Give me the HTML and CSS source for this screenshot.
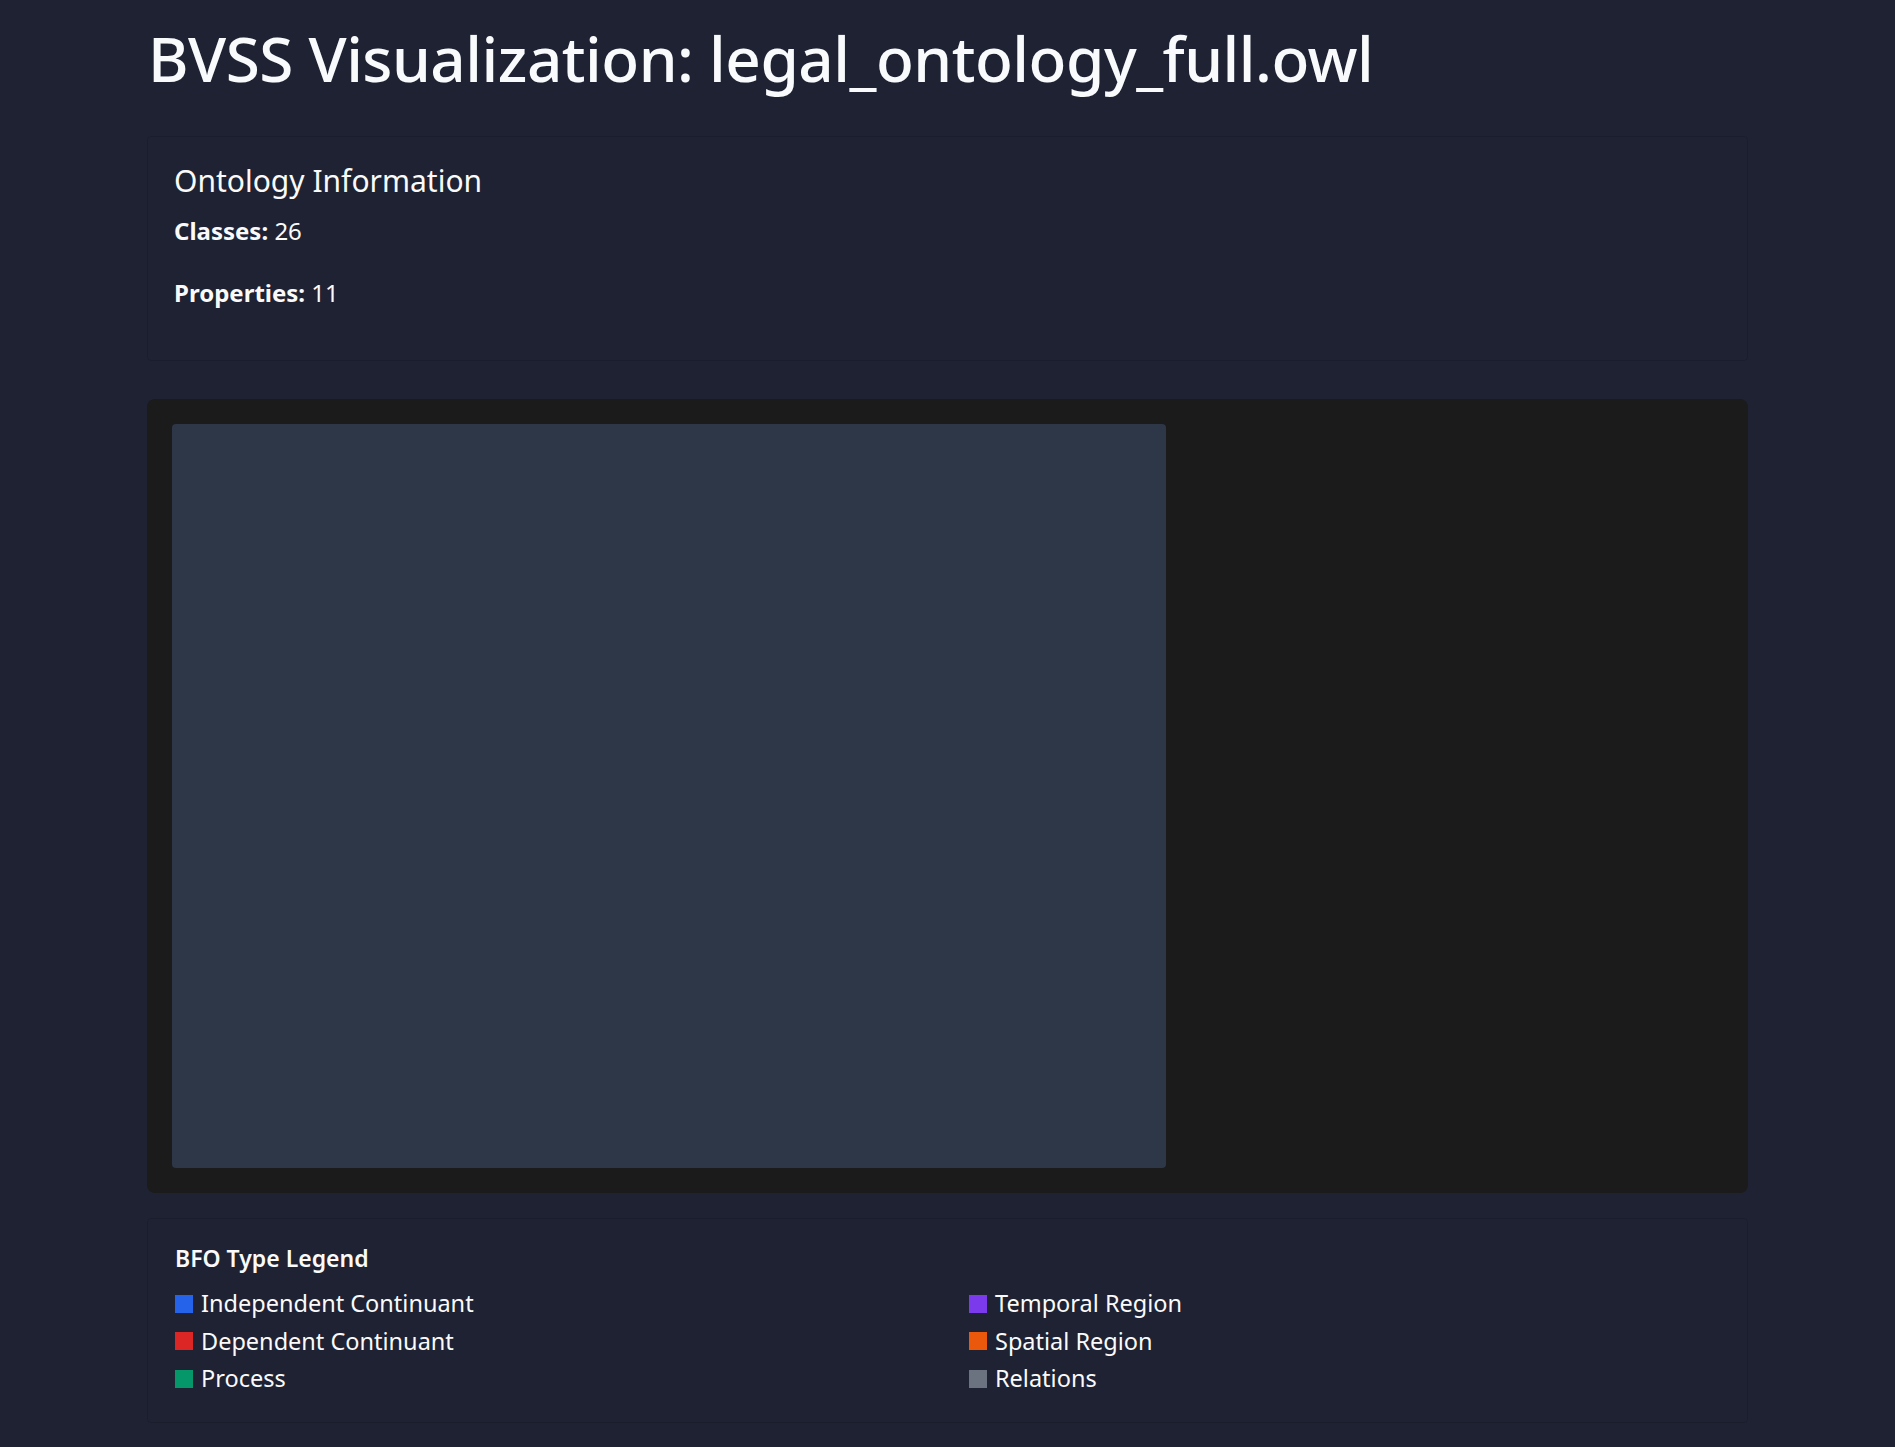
FILE: index.html
```html
<!DOCTYPE html>
<html lang="en">
<head>
<meta charset="utf-8">
<title>BVSS Visualization</title>
<link rel="stylesheet" href="styles.css">
</head>
<body>
<main class="page">
  <h1 class="title">BVSS Visualization: legal_ontology_full.owl</h1>

  <section class="card info-card">
    <h3 class="card-heading">Ontology Information</h3>
    <p class="stat"><strong>Classes:</strong> 26</p>
    <p class="stat"><strong>Properties:</strong> 11</p>
  </section>

  <section class="viz-frame">
    <div class="viz-canvas"></div>
  </section>

  <section class="card legend-card">
    <h4 class="legend-heading">BFO Type Legend</h4>
    <div class="legend-grid">
      <ul class="legend-col">
        <li class="legend-item"><span class="swatch sw-ic"></span>Independent Continuant</li>
        <li class="legend-item"><span class="swatch sw-dc"></span>Dependent Continuant</li>
        <li class="legend-item"><span class="swatch sw-pr"></span>Process</li>
      </ul>
      <ul class="legend-col">
        <li class="legend-item"><span class="swatch sw-tr"></span>Temporal Region</li>
        <li class="legend-item"><span class="swatch sw-sr"></span>Spatial Region</li>
        <li class="legend-item"><span class="swatch sw-rel"></span>Relations</li>
      </ul>
    </div>
  </section>
</main>
</body>
</html>
```

FILE: styles.css
```css
* { box-sizing: border-box; }

html, body {
  margin: 0;
  padding: 0;
  background: #1e2233;
  color: #fafafa;
  font-family: "Noto Sans", "Open Sans", sans-serif;
}

.page {
  width: 1601px;
  margin: 0 auto;
  padding-top: 16px;
  display: flex;
  flex-direction: column;
}

.title {
  margin: 0;
  font-size: 62px;
  font-weight: 500;
  line-height: 84px;
  letter-spacing: -0.5px;
  padding-left: 1px;
  color: #f8fafc;
}

.card {
  border: 1px solid rgba(0, 0, 0, 0.12);
  border-radius: 4px;
}

.info-card {
  margin-top: 36px;
  height: 225px;
  padding: 23px 26px;
}

.card-heading {
  margin: 0;
  font-size: 30px;
  font-weight: 400;
  line-height: 42px;
}

.stat {
  margin: 12px 0 0;
  font-size: 24px;
  line-height: 34px;
}
.stat + .stat { margin-top: 28px; }

.stat strong { font-weight: 700; }

.viz-frame {
  margin-top: 38px;
  height: 794px;
  background: #1b1b1b;
  border-radius: 8px;
  padding: 25px;
}

.viz-canvas {
  width: 994px;
  height: 744px;
  background: #2d3748;
  border-radius: 4px;
}

.legend-card {
  margin-top: 25px;
  height: 205px;
  padding: 22px 27px;
}

.legend-heading {
  margin: 0;
  font-size: 23px;
  font-weight: 600;
  line-height: 34px;
}

.legend-grid {
  margin-top: 10px;
  display: grid;
  grid-template-columns: 751px 1fr;
  column-gap: 43px;
}

.legend-col {
  list-style: none;
  margin: 0;
  padding: 0;
  display: flex;
  flex-direction: column;
}

.legend-item {
  display: flex;
  align-items: center;
  gap: 8px;
  font-size: 23.5px;
  line-height: 37.5px;
}

.swatch {
  width: 18px;
  height: 18px;
  flex: none;
}

.sw-ic { background: #2563eb; }
.sw-dc { background: #dc2626; }
.sw-pr { background: #059669; }
.sw-tr { background: #7c3aed; }
.sw-sr { background: #ea580c; }
.sw-rel { background: #6b7280; }
```
